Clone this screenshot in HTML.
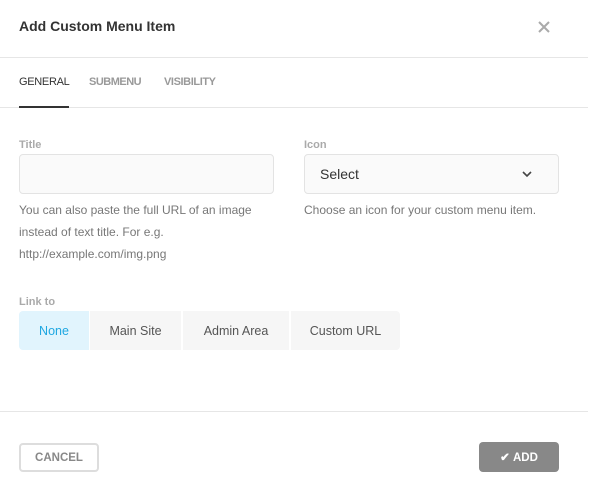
<!DOCTYPE html>
<html><head><style>
*{box-sizing:border-box;margin:0;padding:0}
body{width:600px;height:487px;background:#fff;font-family:"Liberation Sans",sans-serif;position:relative;overflow:hidden;color:#333}
.a{position:absolute}
.line{position:absolute;left:0;width:588px;height:1px;background:#e6e6e6}
.lbl{font-size:11px;font-weight:bold;color:#aaa}
.help{font-size:12px;color:#777;line-height:22px}
.inp{border:1px solid #e3e3e3;border-radius:4px;background:#fafafa}
.seg{position:absolute;top:311px;height:39px;background:#f6f6f6;font-size:12.5px;color:#555;display:flex;align-items:center;justify-content:center}
</style></head><body>
<div class="a" style="left:19px;top:18px;font-size:14px;font-weight:bold;color:#333">Add Custom Menu Item</div>
<svg class="a" style="left:538px;top:21px" width="12" height="12" viewBox="0 0 12 12"><path d="M1 1l10 10M11 1L1 11" stroke="#aaa" stroke-width="2"/></svg>
<div class="line" style="top:57px"></div>
<div class="a" style="left:19px;top:76px;font-size:11px;color:#333;letter-spacing:-0.3px">GENERAL</div>
<div class="a" style="left:89px;top:76px;font-size:11px;color:#999;font-weight:bold;letter-spacing:-0.5px">SUBMENU</div>
<div class="a" style="left:164px;top:76px;font-size:11px;color:#999;font-weight:bold;letter-spacing:-0.4px">VISIBILITY</div>
<div class="line" style="top:107px"></div>
<div class="a" style="left:19px;top:106px;width:50px;height:2px;background:#333"></div>
<div class="a lbl" style="left:19px;top:139px">Title</div>
<div class="a inp" style="left:19px;top:154px;width:255px;height:40px"></div>
<div class="a help" style="left:19px;top:199px;width:260px">You can also paste the full URL of an image instead of text title. For e.g. http://example.com/img.png</div>
<div class="a lbl" style="left:304px;top:139px">Icon</div>
<div class="a inp" style="left:304px;top:154px;width:255px;height:40px"></div>
<div class="a" style="left:320px;top:166px;font-size:14px;color:#333">Select</div>
<svg class="a" style="left:521px;top:170px" width="12" height="8" viewBox="0 0 12 8"><path d="M2 2l4 4 4-4" fill="none" stroke="#444" stroke-width="1.6"/></svg>
<div class="a help" style="left:304px;top:199px">Choose an icon for your custom menu item.</div>
<div class="a lbl" style="left:19px;top:296px">Link to</div>
<div class="seg" style="left:19px;width:70px;background:#e1f4fd;color:#1ea7e1;border-radius:4px 0 0 4px">None</div>
<div class="seg" style="left:90px;width:91px">Main Site</div>
<div class="seg" style="left:183px;width:106px">Admin Area</div>
<div class="seg" style="left:291px;width:109px;border-radius:0 4px 4px 0">Custom URL</div>
<div class="line" style="top:411px"></div>
<div class="a" style="left:19px;top:443px;width:80px;height:29px;border:2px solid #ddd;border-radius:4px;font-size:11.5px;font-weight:bold;color:#888;display:flex;align-items:center;justify-content:center">CANCEL</div>
<div class="a" style="left:479px;top:442px;width:80px;height:30px;background:#888;border-radius:4px;font-size:11.5px;font-weight:bold;color:#fff;display:flex;align-items:center;justify-content:center">✔&nbsp;ADD</div>
</body></html>
